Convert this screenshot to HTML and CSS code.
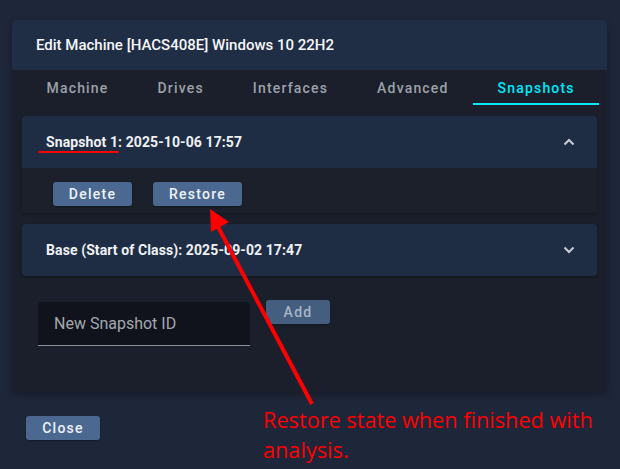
FILE: index.html
```html
<!DOCTYPE html>
<html>
<head>
<meta charset="utf-8">
<link rel="stylesheet" href="styles.css">
</head>
<body>
<div class="page">
  <div class="dialog">
    <div class="dialog-header">Edit Machine [HACS408E] Windows 10 22H2</div>
    <div class="dialog-body">
      <div class="tabs">
        <div class="tab">Machine</div>
        <div class="tab">Drives</div>
        <div class="tab">Interfaces</div>
        <div class="tab">Advanced</div>
        <div class="tab active">Snapshots</div>
      </div>
      <div class="panel open">
        <div class="panel-header">
          <span class="panel-title">Snapshot 1: 2025-10-06 17:57</span>
          <svg class="chev" width="12" height="8" viewBox="0 0 12 8"><path d="M1.5 6.5 L6 2 L10.5 6.5" fill="none" stroke="#c9cdd3" stroke-width="2"/></svg>
        </div>
        <div class="panel-content">
          <button class="btn btn-delete">Delete</button>
          <button class="btn btn-restore">Restore</button>
        </div>
      </div>
      <div class="panel">
        <div class="panel-header">
          <span class="panel-title">Base (Start of Class): 2025-09-02 17:47</span>
          <svg class="chev" width="12" height="8" viewBox="0 0 12 8"><path d="M1.5 1.5 L6 6 L10.5 1.5" fill="none" stroke="#c9cdd3" stroke-width="2"/></svg>
        </div>
      </div>
      <div class="add-row">
        <div class="input">New Snapshot ID</div>
        <button class="btn btn-add">Add</button>
      </div>
    </div>
  </div>
  <div class="actions">
    <button class="btn btn-close">Close</button>
  </div>
</div>
<div class="underline-mark"></div>
<svg class="arrow" width="620" height="469" viewBox="0 0 620 469">
  <line x1="312" y1="404" x2="217" y2="225" stroke="#ff0000" stroke-width="4"/>
  <polygon points="210,209 229,222 211,232" fill="#ff0000"/>
</svg>
<div class="note">Restore state when finished with<br>analysis.</div>
</body>
</html>
```

FILE: styles.css
```css
html, body {
  margin: 0;
  padding: 0;
  background: #1e2639;
  width: 620px;
  height: 469px;
  overflow: hidden;
  font-family: Roboto, "Liberation Sans", sans-serif;
}

.page {
  padding: 20px 0 0 12px;
}

.dialog {
  width: 595px;
  height: 372px;
  background: #1a1f2b;
  border-radius: 4px;
  overflow: hidden;
  box-shadow: 0 3px 6px rgba(0, 0, 0, 0.25);
}

.dialog-header {
  height: 50px;
  background: #1f2d45;
  display: flex;
  align-items: center;
  padding: 0 24px;
  color: #f4f6fa;
  font-size: 15px;
  font-weight: 500;
}

.dialog-body {
  padding: 0 10px;
}

.tabs {
  display: flex;
  height: 35px;
}

.tab {
  display: flex;
  align-items: center;
  justify-content: center;
  padding: 2px 24.5px 0 24.5px;
  font-size: 14px;
  font-weight: 500;
  letter-spacing: 1.18px;
  color: #9ca1aa;
  box-sizing: border-box;
  border-bottom: 2px solid transparent;
}

.tab.active {
  color: #00e8f8;
  border-bottom-color: #00e8f8;
}

.panel {
  margin-top: 11px;
  border-radius: 4px;
  overflow: hidden;
  box-shadow: 0 2px 3px rgba(0, 0, 0, 0.25);
}

.panel-header {
  height: 52px;
  background: #1f2d44;
  display: flex;
  align-items: center;
  justify-content: space-between;
  padding: 0 22px 0 24px;
  color: #eef2f7;
  font-size: 14px;
  font-weight: 700;
  letter-spacing: 0.1px;
}

.panel-content {
  height: 45px;
  background: #1b202b;
  display: flex;
  align-items: flex-start;
  padding: 14px 0 0 31px;
  box-sizing: border-box;
  gap: 21px;
}

.btn {
  height: 24px;
  border: none;
  border-radius: 3px;
  background: #4a6890;
  color: #eef2f7;
  font-family: Roboto, "Liberation Sans", sans-serif;
  font-size: 14px;
  font-weight: 500;
  letter-spacing: 1.25px;
  padding: 0;
  box-shadow: 0 1px 2px rgba(0, 0, 0, 0.3);
}

.btn-delete { width: 79px; }
.btn-restore { width: 89px; }

.add-row {
  display: flex;
  align-items: flex-start;
  padding: 24px 0 0 16px;
  gap: 16px;
}

.input {
  height: 43px;
  background: #10131b;
  border-radius: 4px 4px 0 0;
  border-bottom: 1px solid #8c9098;
  color: #a3a8b0;
  font-size: 16px;
  display: flex;
  align-items: center;
  padding-left: 16px;
  width: 196px;
  margin-top: 2px;
}

.btn-add {
  width: 64px;
  background: #445e80;
  color: #a9b5c4;
}

.actions {
  padding: 24px 0 0 14px;
}

.btn-close {
  width: 74px;
}

.underline-mark {
  position: absolute;
  left: 38px;
  top: 151px;
  width: 81px;
  height: 2px;
  background: #ff0000;
  border-radius: 1px;
}

.arrow {
  position: absolute;
  left: 0;
  top: 0;
}

.note {
  position: absolute;
  left: 263px;
  top: 405px;
  color: #ff0000;
  font-family: "Open Sans", "Noto Sans", sans-serif;
  font-size: 21.7px;
  line-height: 30px;
}
```
